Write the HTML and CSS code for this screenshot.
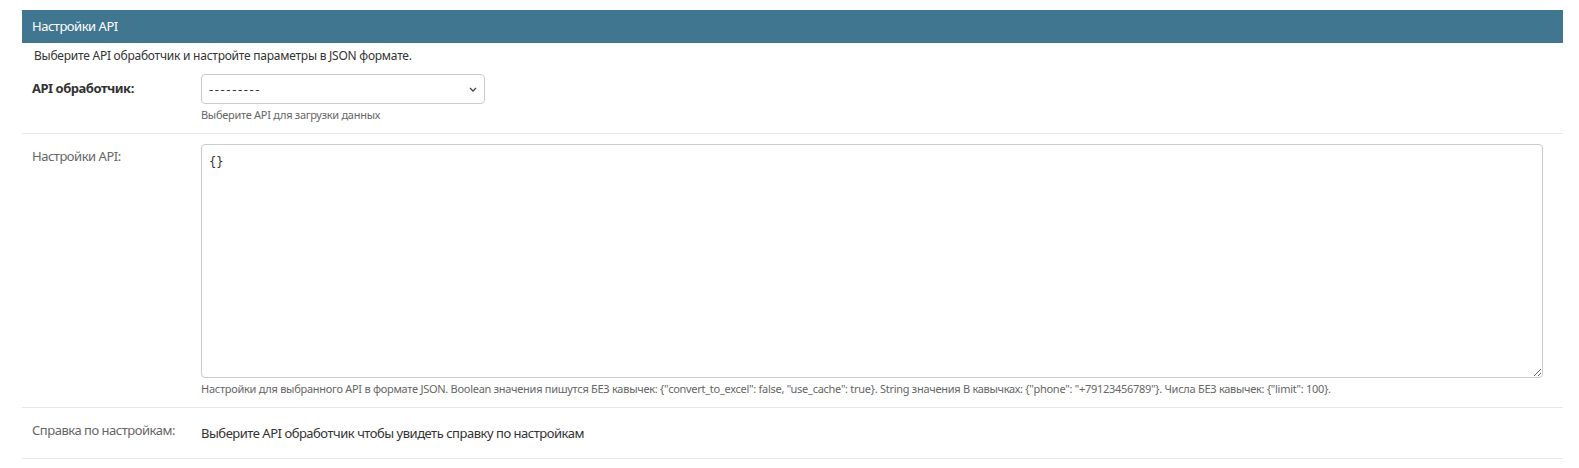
FILE: index.html
```html
<!DOCTYPE html>
<html lang="ru">
<head>
    <meta charset="UTF-8">
    <title>Настройки API</title>
    <link rel="stylesheet" href="styles.css">
</head>
<body>
    <fieldset class="module">
        <h2>Настройки API</h2>
        <div class="description">Выберите API обработчик и настройте параметры в JSON формате.</div>

        <div class="form-row">
            <label class="required" for="id_api_handler">API обработчик:</label>
            <div class="field">
                <div class="select-wrap">
                    <select id="id_api_handler" name="api_handler">
                        <option value="" selected>---------</option>
                    </select>
                    <svg class="chevron" width="8" height="5" viewBox="0 0 8 5"><path d="M1 1 L4 4 L7 1" fill="none" stroke="#444" stroke-width="1.3"/></svg>
                </div>
                <div class="help">Выберите API для загрузки данных</div>
            </div>
        </div>

        <div class="form-row">
            <label for="id_api_settings">Настройки API:</label>
            <div class="field field-wide">
                <textarea id="id_api_settings" name="api_settings">{}</textarea>
                <div class="help">Настройки для выбранного API в формате JSON. Boolean значения пишутся БЕЗ кавычек: {"convert_to_excel": false, "use_cache": true}. String значения В кавычках: {"phone": "+79123456789"}. Числа БЕЗ кавычек: {"limit": 100}.</div>
            </div>
        </div>

        <div class="form-row">
            <label>Справка по настройкам:</label>
            <div class="readonly">Выберите API обработчик чтобы увидеть справку по настройкам</div>
        </div>
    </fieldset>
</body>
</html>
```

FILE: styles.css
```css
body {
    margin: 0;
    padding: 10px 16px 0 22px;
    font-family: "Noto Sans", "Open Sans", sans-serif;
    letter-spacing: -0.03em;
    color: #333;
    background: #fff;
}

fieldset.module {
    margin: 0;
    padding: 0;
    border: none;
    min-width: 0;
}

.module h2 {
    margin: 0;
    padding: 8px 10px;
    height: 17px;
    line-height: 17px;
    font-size: 13px;
    font-weight: normal;
    color: #fff;
    background-color: #417690;
}

.description {
    padding: 5px 0 0 12px;
    font-size: 12px;
    line-height: 16px;
    letter-spacing: -0.02em;
    color: #333;
}

.form-row {
    display: flex;
    padding: 10px;
    border-bottom: 1px solid #e8e8e8;
}

.form-row label {
    flex: 0 0 160px;
    padding: 0 9px 0 0;
    font-size: 13px;
    line-height: 20px;
    color: #666;
    padding-top: 2px;
}

.form-row label.required {
    font-weight: bold;
    color: #333;
    padding-top: 4px;
}

.field {
    flex: 0 0 auto;
}

.field-wide {
    flex: 1 1 auto;
}

.select-wrap {
    position: relative;
    width: 284px;
}

select {
    display: block;
    width: 284px;
    height: 30px;
    padding: 0 7px;
    font-family: inherit;
    font-size: 13px;
    letter-spacing: 1.6px;
    color: #333;
    background: #fff;
    border: 1px solid #ccc;
    border-radius: 4px;
    appearance: none;
    -webkit-appearance: none;
}

.chevron {
    position: absolute;
    right: 8px;
    top: 13px;
    pointer-events: none;
}

textarea {
    display: block;
    box-sizing: border-box;
    width: calc(100% - 10px);
    height: 234px;
    margin: 0;
    padding: 10px 7px;
    font-family: "DejaVu Sans Mono", monospace;
    font-size: 12px;
    letter-spacing: 0;
    color: #333;
    border: 1px solid #ccc;
    border-radius: 4px;
    resize: vertical;
}

.help {
    margin-top: 3px;
    font-size: 11px;
    line-height: 16px;
    letter-spacing: -0.025em;
    color: #666;
    white-space: nowrap;
}

.readonly {
    padding: 5px 0;
    font-size: 13px;
    line-height: 20px;
    color: #333;
}
```
